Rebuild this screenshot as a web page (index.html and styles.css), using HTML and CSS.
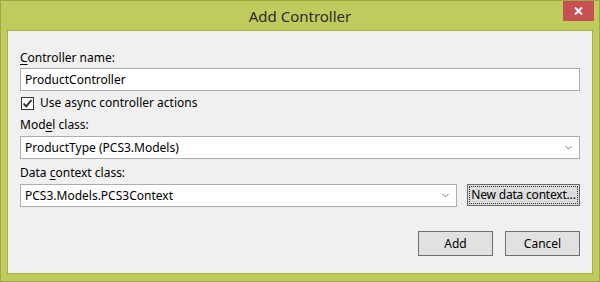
FILE: index.html
```html
<!DOCTYPE html>
<html>
<head>
<meta charset="utf-8">
<link rel="stylesheet" href="styles.css">
</head>
<body>
<div class="window">
  <div class="titlebar">
    <div class="title">Add Controller</div>
    <div class="close">
      <svg width="9" height="8" viewBox="0 0 9 8"><path d="M1 0.5 L8 7.5 M8 0.5 L1 7.5" stroke="#fff" stroke-width="2"/></svg>
    </div>
  </div>
  <div class="panel">
    <div class="label"><u>C</u>ontroller name:</div>
    <div class="textbox">ProductController</div>
    <div class="check-row">
      <span class="checkbox">
        <svg width="11" height="11" viewBox="0 0 11 11"><path d="M1.5 5.5 L4.2 8.3 L9.5 2" fill="none" stroke="#222" stroke-width="1.8"/></svg>
      </span>
      <span>Use async controller actions</span>
    </div>
    <div class="label label-gap">Mod<u>e</u>l class:</div>
    <div class="textbox combo">
      <span>ProductType (PCS3.Models)</span>
      <svg class="chev" width="7" height="5" viewBox="0 0 7 5"><path d="M0.5 1 L3.5 4 L6.5 1" fill="none" stroke="#7a7a7a" stroke-width="1"/></svg>
    </div>
    <div class="label label-gap">Data <u>c</u>ontext class:</div>
    <div class="ctx-row">
      <div class="textbox combo ctx-combo">
        <span>PCS3.Models.PCS3Context</span>
        <svg class="chev" width="7" height="5" viewBox="0 0 7 5"><path d="M0.5 1 L3.5 4 L6.5 1" fill="none" stroke="#7a7a7a" stroke-width="1"/></svg>
      </div>
      <div class="button new-ctx"><span class="focus">New data context...</span></div>
    </div>
    <div class="buttons">
      <div class="button">Add</div>
      <div class="button">Cancel</div>
    </div>
  </div>
</div>
</body>
</html>
```

FILE: styles.css
```css
* { box-sizing: border-box; }
html, body { margin: 0; padding: 0; }
body {
  font-family: "Noto Sans", "DejaVu Sans", sans-serif;
  font-size: 12px;
  color: #000;
}
.window {
  width: 600px;
  height: 282px;
  background: #bfcb5c;
  border: 1px solid #9aa946;
  display: flex;
  flex-direction: column;
}
.titlebar {
  height: 29px;
  position: relative;
  display: flex;
  align-items: center;
  justify-content: center;
}
.title {
  font-size: 15px;
  color: #2b2b2b;
  line-height: 20px;
  margin-top: 1px;
}
.close {
  position: absolute;
  right: 5px;
  top: 0;
  width: 31px;
  height: 20px;
  background: #c75050;
  display: flex;
  align-items: center;
  justify-content: center;
}
.panel {
  margin: 0 6px 7px 6px;
  flex: 1;
  background: #f0f0f0;
  border: 1px solid #a3b04b;
  padding: 19px 12px 0 12px;
  display: flex;
  flex-direction: column;
}
.label {
  line-height: 16px;
  height: 16px;
}
.label u { text-decoration: underline; text-underline-offset: 2px; }
.label-gap { margin-top: 6px; }
.textbox {
  margin-top: 2px;
  height: 23px;
  background: #fff;
  border: 1px solid #abadb3;
  padding: 0 0 0 4px;
  display: flex;
  align-items: center;
  line-height: 16px;
}
.combo {
  margin-top: 3px;
  justify-content: space-between;
  padding-right: 7px;
}
.chev { flex: none; }
.check-row {
  margin-top: 4px;
  height: 16px;
  line-height: 16px;
  display: flex;
  align-items: center;
  padding-left: 1px;
}
.checkbox {
  width: 13px;
  height: 13px;
  border: 1px solid #333;
  background: #fff;
  margin-right: 6px;
  display: flex;
  align-items: center;
  justify-content: center;
}
.ctx-row {
  display: flex;
  margin-top: 3px;
  gap: 10px;
}
.ctx-row .textbox { margin-top: 0; }
.ctx-combo { width: 437px; }
.button {
  height: 25px;
  background: #e1e1e1;
  border: 1px solid #707070;
  display: flex;
  align-items: center;
  justify-content: center;
  line-height: 16px;
  white-space: nowrap;
}
.new-ctx {
  width: 113px;
  height: 22px;
  padding: 1px;
  border-color: #6b6b6b;
  background: #dcdcdc;
}
.focus {
  width: 100%;
  height: 100%;
  border: 1px dotted #333;
  display: flex;
  align-items: center;
  justify-content: center;
  letter-spacing: -0.2px;
}
.buttons {
  display: flex;
  justify-content: flex-end;
  gap: 12px;
  margin-top: 24px;
}
.buttons .button { width: 75px; }
```
